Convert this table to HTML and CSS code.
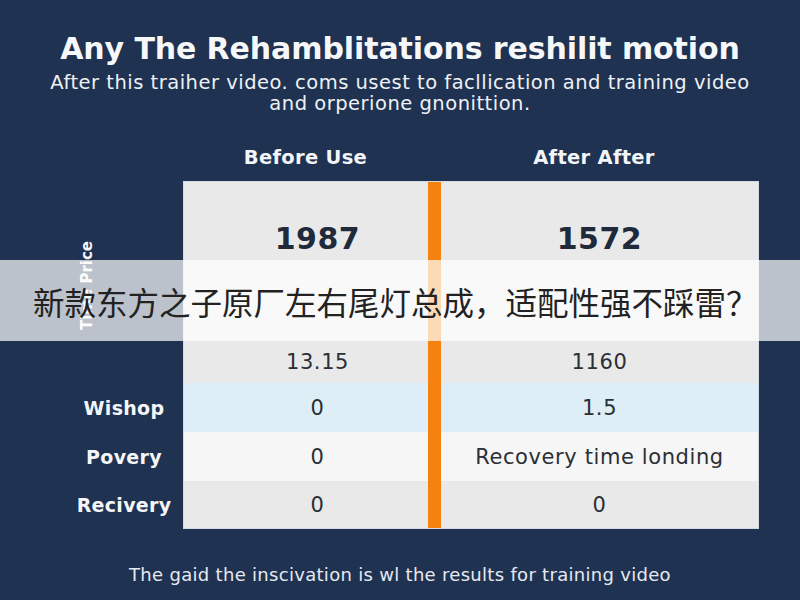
FILE: index.html
```html
<!DOCTYPE html>
<html lang="en">
<head>
<meta charset="utf-8">
<title>Rehabilitation comparison</title>
<link rel="stylesheet" href="styles.css">
</head>
<body>
<main class="page">
  <header class="intro">
    <h1 class="title">Any The Rehamblitations reshilit motion</h1>
    <p class="subtitle">After this traiher video. coms usest to facllication and training video<br>and orperione gnonittion.</p>
  </header>

  <section class="compare">
    <div class="heads">
      <div class="head-spacer"></div>
      <div class="head head-before">Before Use</div>
      <div class="head-gap"></div>
      <div class="head head-after">After After</div>
    </div>

    <div class="body">
      <div class="labels">
        <div class="label-cell label-tall"><span class="rotated">Time Price</span></div>
        <div class="label-cell r3"></div>
        <div class="label-cell r4">Wishop</div>
        <div class="label-cell r5">Povery</div>
        <div class="label-cell r6">Recivery</div>
      </div>

      <div class="table">
        <div class="row r1 gray">
          <div class="cell left big">1987</div>
          <div class="divider"></div>
          <div class="cell big">1572</div>
        </div>
        <div class="row r2 gray">
          <div class="cell left"></div>
          <div class="divider"></div>
          <div class="cell"></div>
        </div>
        <div class="row r3 gray">
          <div class="cell left">13.15</div>
          <div class="divider"></div>
          <div class="cell">1160</div>
        </div>
        <div class="row r4 blue">
          <div class="cell left">0</div>
          <div class="divider"></div>
          <div class="cell">1.5</div>
        </div>
        <div class="row r5 white">
          <div class="cell left">0</div>
          <div class="divider"></div>
          <div class="cell">Recovery time londing</div>
        </div>
        <div class="row r6 gray">
          <div class="cell left">0</div>
          <div class="divider"></div>
          <div class="cell">0</div>
        </div>
      </div>
    </div>
  </section>

  <p class="footer">The gaid the inscivation is wl the results for training video</p>
</main>

<div class="banner">新款东方之子原厂左右尾灯总成，适配性强不踩雷？</div>
</body>
</html>
```

FILE: styles.css
```css
* { box-sizing: border-box; }

html, body {
  margin: 0;
  padding: 0;
}

body {
  width: 800px;
  height: 600px;
  overflow: hidden;
  background: #1f3251;
  font-family: "DejaVu Sans", "Open Sans", sans-serif;
  color: #ffffff;
  position: relative;
}

.page {
  display: flex;
  flex-direction: column;
  align-items: stretch;
  padding-top: 31px;
}

.intro {
  display: flex;
  flex-direction: column;
  align-items: center;
  text-align: center;
}

.title {
  margin: 0;
  font-size: 30px;
  line-height: 36px;
  font-weight: 700;
  letter-spacing: -0.1px;
  color: #f6f7f9;
  white-space: nowrap;
}

.subtitle {
  margin: 5px 0 0;
  font-size: 19.5px;
  line-height: 21px;
  font-weight: 400;
  letter-spacing: 0.5px;
  color: #eef1f5;
  white-space: nowrap;
}

.compare {
  margin-top: 33px;
  display: flex;
  flex-direction: column;
}

.heads {
  display: flex;
  height: 22px;
  align-items: center;
}

.head-spacer { width: 183px; }
.head-gap { width: 13px; }

.head {
  font-size: 19.5px;
  font-weight: 700;
  line-height: 22px;
  letter-spacing: 0.3px;
  color: #f3f5f8;
  text-align: center;
  white-space: nowrap;
}

.head-before { width: 245px; }
.head-after { width: 318px; margin-left: -6px; }

.body {
  display: flex;
  margin-top: 12px;
}

.labels {
  width: 183px;
  display: flex;
  flex-direction: column;
}

.label-cell {
  display: flex;
  align-items: center;
  justify-content: center;
  padding-left: 65px;
  font-size: 19px;
  font-weight: 700;
  letter-spacing: 0.3px;
  color: #f4f6f9;
  white-space: nowrap;
}

.label-tall {
  height: 159px;
  justify-content: flex-start;
  align-items: flex-end;
  padding: 0;
}

.rotated {
  display: block;
  width: 80px;
  height: 20px;
  line-height: 20px;
  margin: 0 0 40px 47px;
  text-align: center;
  font-size: 15px;
  font-weight: 700;
  letter-spacing: 0;
  color: #f4f6f9;
  transform: rotate(-90deg);
  white-space: nowrap;
}

.table {
  width: 576px;
  display: flex;
  flex-direction: column;
  border: 1px solid #d3dae3;
  background: #e9e9e9;
}

.row {
  display: grid;
  grid-template-columns: 244px 13px 317px;
}

.r1 { height: 113px; }
.r2 { height: 45px; }
.r3 { height: 43px; }
.r4 { height: 49px; }
.r5 { height: 49px; }
.r6 { height: 47px; }

.labels .r3 { height: 43px; }
.labels .r4 { height: 49px; }
.labels .r5 { height: 49px; }
.labels .r6 { height: 48px; }

.gray { background: #e9e9e9; }
.blue { background: #deeef7; }
.white { background: #f6f6f6; }

.cell {
  display: flex;
  align-items: center;
  justify-content: center;
  font-size: 21px;
  letter-spacing: 0.6px;
  color: #2b2f36;
  white-space: nowrap;
}

.cell.left {
  padding-left: 23px;
}

.big {
  font-size: 30px;
  font-weight: 700;
  color: #1f2a3b;
  letter-spacing: 0.5px;
}

.divider {
  background: #f5820f;
}

.footer {
  margin: 35px 0 0;
  text-align: center;
  font-size: 18px;
  line-height: 22px;
  letter-spacing: 0.3px;
  color: #e6eaf0;
  white-space: nowrap;
}

.banner {
  position: absolute;
  left: 0;
  top: 260px;
  width: 800px;
  height: 81px;
  display: flex;
  align-items: center;
  padding-left: 33px;
  background: rgba(255, 255, 255, 0.7);
  font-family: "Noto Sans CJK SC", "Noto Sans", sans-serif;
  font-size: 31.5px;
  color: #222222;
  white-space: nowrap;
}
```
